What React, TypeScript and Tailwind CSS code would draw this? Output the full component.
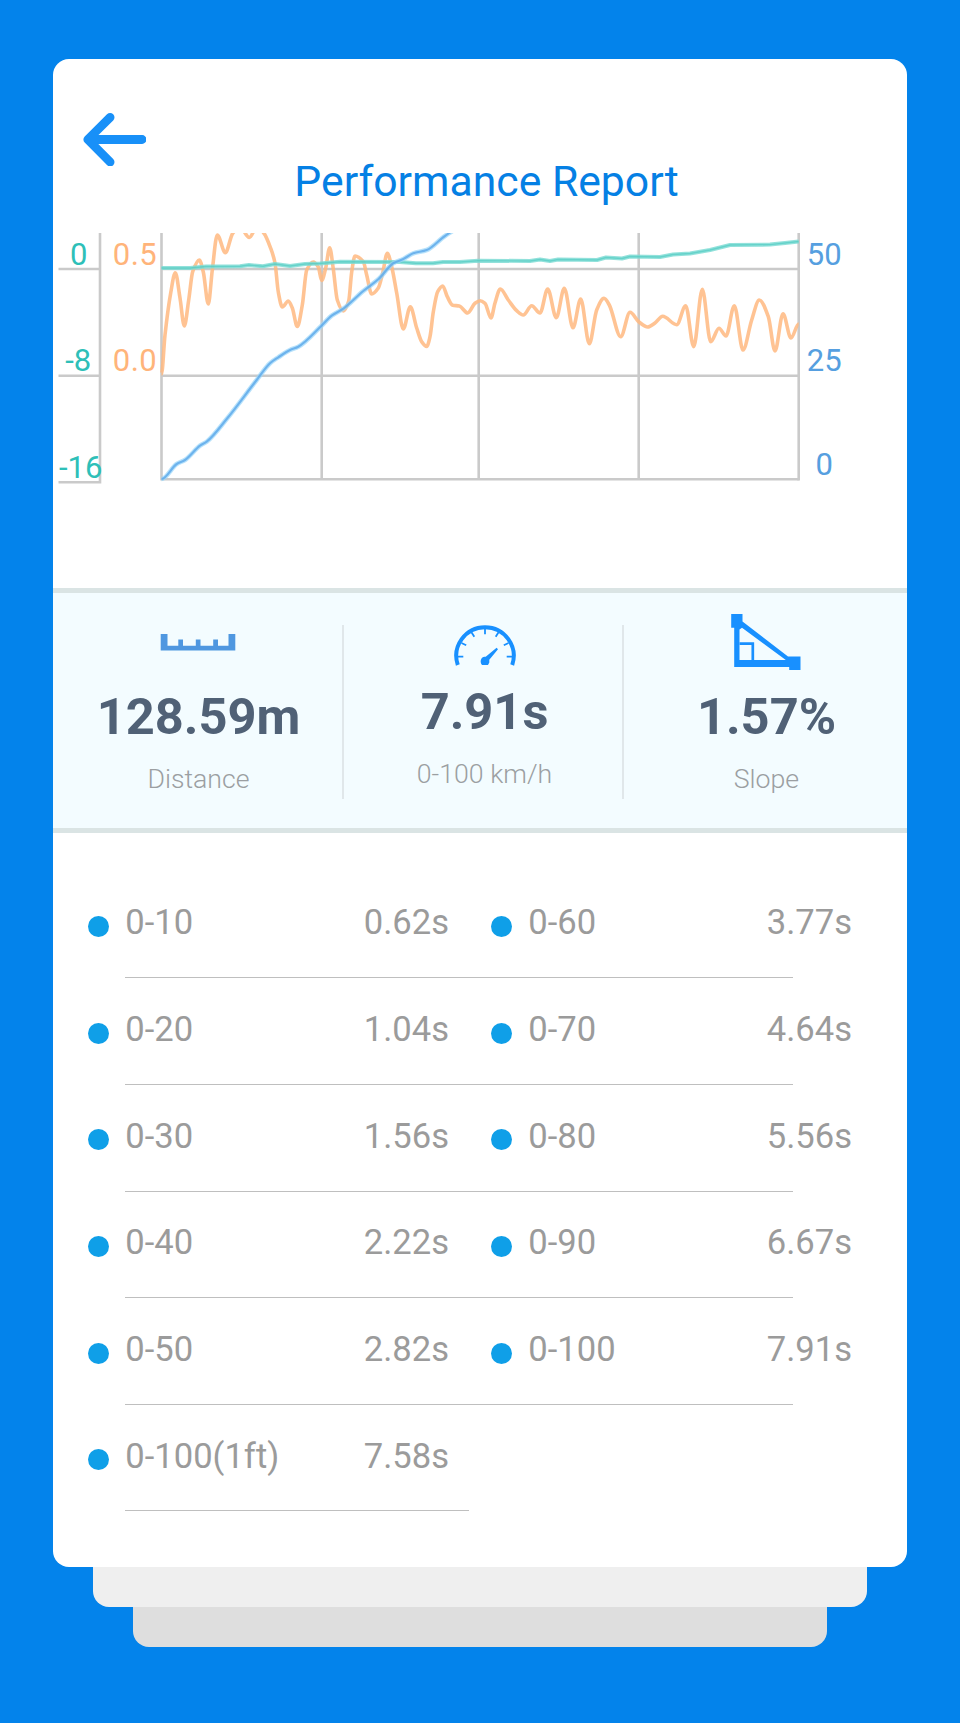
type Point = [number, number];

const acceleration: Point[] = [
  [161.5, 374], [165, 335], [170.7, 293], [175.3, 272.7], [180, 298], [184.3, 326], [188.7, 300],
  [192.7, 271.7], [199.3, 260], [203.3, 272], [208.3, 304], [212.3, 270], [217.3, 235], [225.3, 252.7],
  [232.7, 233.3], [240, 227], [249.3, 237.5], [257, 227], [264, 233.3], [270.7, 248.3], [275, 263],
  [278.3, 292], [282.3, 307], [288.3, 301], [292.3, 308], [297.3, 326.5], [302.3, 305], [306.7, 270],
  [313.3, 262], [318.3, 267], [321.7, 280.5], [325.7, 268], [329.7, 247.7], [333.3, 269], [337.3, 300],
  [343.3, 311], [348.7, 301], [351.7, 272], [355, 256], [363.3, 261.7], [366.7, 275], [371.7, 294],
  [378.3, 288], [382.7, 273], [387.3, 253.3], [391.7, 266.7], [396.7, 293], [403.3, 329], [410.3, 306.7],
  [416.7, 328], [421.7, 341.7], [426.7, 346.5], [430, 336.7], [433.3, 312], [437.7, 291.7], [442.7, 286],
  [447.3, 296.7], [452.7, 305.3], [459.3, 306], [467.7, 313], [475, 303.3], [480, 300.7], [485, 303.3],
  [491, 318], [495, 303], [500.3, 289], [508.3, 300], [516.7, 310.7], [523.3, 315], [531.7, 305.7],
  [540, 313], [547.7, 289], [556.3, 317.7], [564.3, 288.3], [573, 327.7], [580.7, 299], [589.3, 343.7],
  [596.7, 310], [604, 298.3], [609.3, 305], [620.7, 336.7], [630, 312.3], [639, 322], [647.7, 327],
  [655, 323], [662.7, 316.3], [676.7, 324.7], [685.7, 305.7], [693.7, 346.7], [702.3, 289.3],
  [710.7, 341.7], [719, 328.3], [726, 336], [734.3, 305.7], [743, 350], [751.7, 320], [759.3, 300],
  [768.3, 316.7], [775, 351], [783, 313.7], [791, 338], [798.7, 324],
];

const speed: Point[] = [
  [161.5, 479], [176.7, 464], [185, 460], [200, 445.7], [206.7, 441.7], [226.7, 419], [256.7, 380],
  [270, 363.3], [278.3, 357.3], [290, 350], [298.3, 346.7], [321.3, 326], [331.7, 315.7], [343.3, 308.7],
  [363.3, 291], [378.3, 279.3], [393.3, 263.3], [403.3, 259], [413.3, 253.3], [426.7, 250], [445, 236],
  [456, 230],
];

const height: Point[] = [
  [161.5, 268], [190, 268], [206, 266.5], [240, 266.3], [249, 265], [263, 266.3], [275, 264], [290, 266],
  [305, 264], [320, 263.5], [340, 261.8], [400, 262], [416, 263.3], [433, 263.3], [443, 262], [460, 262],
  [478, 260.7], [530, 261], [540, 259.5], [550, 261], [558, 259.5], [597, 260], [606, 257.5],
  [622, 258.5], [630, 256.5], [660, 257], [673, 254.5], [690, 253.5], [710, 250], [730, 245], [770, 244.6],
  [785, 243], [798.7, 241.5],
];

// Smooth curve that never overshoots its peaks
function smooth(points: Point[]) {
  const slope = points.map((p, i) => {
    const prev = points[i - 1];
    const next = points[i + 1];
    if (!prev || !next) return 0;
    const a = (p[1] - prev[1]) / (p[0] - prev[0]);
    const b = (next[1] - p[1]) / (next[0] - p[0]);
    return a * b <= 0 ? 0 : (2 * a * b) / (a + b);
  });
  return points
    .map(([x, y], i) => {
      if (i === 0) return `M${x} ${y}`;
      const [px, py] = points[i - 1];
      const h = (x - px) / 3;
      return `C${px + h} ${py + slope[i - 1] * h} ${x - h} ${y - slope[i] * h} ${x} ${y}`;
    })
    .join("");
}

const line = (points: Point[]) => "M" + points.map((p) => p.join(" ")).join("L");

const results = [
  [["0-10", "0.62s"], ["0-60", "3.77s"]],
  [["0-20", "1.04s"], ["0-70", "4.64s"]],
  [["0-30", "1.56s"], ["0-80", "5.56s"]],
  [["0-40", "2.22s"], ["0-90", "6.67s"]],
  [["0-50", "2.82s"], ["0-100", "7.91s"]],
  [["0-100(1ft)", "7.58s"]],
];

function Chart() {
  return (
    <svg className="block h-[260px] w-[854px]" viewBox="53 233 854 260">
      <g stroke="#cacaca" strokeWidth="2.6" fill="none">
        <path d="M100 232V483.6M58.5 269H100M58.5 375.7H100M58.5 482.3H100" />
        <path d="M161.5 232V480.6M321.7 232V479M478.7 232V479M638.7 232V479M798.7 232V480.6" />
        <path d="M161.5 269H798.7M161.5 375.7H798.7M161.5 479.3H798.7" />
      </g>
      <g fill="none" strokeLinejoin="round">
        <path d={smooth(acceleration)} stroke="#ffb980" strokeWidth="3.6" strokeOpacity="0.85" />
        <path d={line(height)} stroke="#7fdcd5" strokeWidth="4" strokeOpacity="0.85" />
        <path d={line(height)} stroke="#3fc6bc" strokeWidth="1.4" strokeOpacity="0.55" />
        <path d={smooth(speed)} stroke="#9ad6fa" strokeWidth="4.6" strokeOpacity="0.7" />
        <path d={smooth(speed)} stroke="#5aa8ea" strokeWidth="2.2" strokeOpacity="0.8" />
      </g>
      <g fontFamily="Roboto, sans-serif" fontSize="31" textAnchor="middle">
        <g fill="#2ebfb8">
          <text x="78.7" y="264.5">0</text>
          <text x="78.3" y="371">-8</text>
          <text x="80.7" y="477.5">-16</text>
        </g>
        <g fill="#ffb47a">
          <text x="134.8" y="264.5" textLength="44">0.5</text>
          <text x="134.8" y="371" textLength="44">0.0</text>
        </g>
        <g fill="#569fe0">
          <text x="824.3" y="264.5">50</text>
          <text x="824.3" y="371.3">25</text>
          <text x="824.3" y="475.3">0</text>
        </g>
      </g>
    </svg>
  );
}

function RulerIcon() {
  return (
    <svg className="h-[56px] w-[76px]" viewBox="0 0 76 56" fill="#4f97e0">
      <path d="M.7 20H7.5V31.8H18.3V25.5H23V31.8H35.8V25.5H40.5V31.8H53.2V25.5H58V31.8H68.5V20H75.3V36.5H.7Z" />
    </svg>
  );
}

function GaugeIcon() {
  return (
    <svg className="h-[56px] w-[62px]" viewBox="453 614 62 56" fill="none" stroke="#1890ff">
      <path d="M456.8 665A28.7 28.7 0 1 1 511.2 665" strokeWidth="4" />
      <path
        d="M457 656.7H462.3M511 656.7H505.7M460.5 643L465.2 645.3M507.5 643L502.8 645.3M470.3 632L473.3 636.8M497.7 632L494.7 636.8M484 629V634.3"
        strokeWidth="1.8"
      />
      <path d="M495.6 647.8L497 649.2L488.3 659.7V662.5L487 665H481C479.3 663 479.3 660.3 480.5 658.5C481.7 657 483 656.8 484.7 656.8Z" fill="#1890ff" stroke="none" />
    </svg>
  );
}

function SlopeIcon() {
  return (
    <svg className="h-[56px] w-[70px]" viewBox="730.5 614 70 56" fill="#1890ff">
      <path d="M730.7 614H742V621.5L787.5 656.5H800V670H788.7V667H733.7V627.7H730.7ZM739 629.5V660H785.3L741.5 627.7Z" fillRule="evenodd" />
      <path d="M739 643.7H752.3V661" fill="none" stroke="#1890ff" strokeWidth="2.7" />
    </svg>
  );
}

function Result({ label, time }: { label: string; time: string }) {
  return (
    <div className="flex w-[403px] items-start">
      <span className="mt-[45px] size-[21px] shrink-0 rounded-full bg-[#0f9fe8]" />
      <span className="mt-[31.4px] ml-[16.3px] flex-1">{label}</span>
      <span className="mt-[31.4px] mr-[42px]">{time}</span>
    </div>
  );
}

export default function App() {
  return (
    <div className="flex min-h-[1723px] flex-col items-center bg-[#0383eb] pt-[59px] font-['Roboto',sans-serif]">
      <main className="h-[1507.5px] w-[854px] rounded-[16px] bg-white">
        <header className="h-[174px] pt-[53px]">
          <svg
            className="ml-[29px] block h-[54px] w-[64px]"
            viewBox="82.2 112 64 54"
            fill="none"
            stroke="#1890f8"
            strokeWidth="8.8"
            strokeLinecap="round"
            strokeLinejoin="round"
          >
            <path d="M142.3 139.5H89M110.3 117.3L88 139.5L110.3 162" />
          </svg>
          <h1 className="-mt-[10px] ml-[13px] text-center text-[42.7px] leading-[50px] text-[#0580e4]">
            Performance Report
          </h1>
        </header>

        <Chart />

        <section className="mt-[95px] flex h-[245px] border-y-[5px] border-[#dae4e4] bg-[#f3fcff] text-center">
          <div className="flex w-[289px] flex-col items-center pt-[21px]">
            <RulerIcon />
            <div className="mt-[17px] ml-[2px] text-[50.6px] leading-[60px] font-bold text-[#506176]">128.59m</div>
            <div className="mt-[16px] ml-[2px] text-[26.7px] leading-[32px] font-light text-[#9b9fa2]">Distance</div>
          </div>
          <div className="mt-[32px] h-[174px] w-[2px] bg-[#e0e7ea]" />
          <div className="flex w-[278px] flex-col items-center pt-[21px] pl-[3px]">
            <GaugeIcon />
            <div className="mt-[12px] text-[50.6px] leading-[60px] font-bold text-[#506176]">7.91s</div>
            <div className="mt-[16px] text-[26.7px] leading-[32px] font-light text-[#9b9fa2]">0-100 km/h</div>
          </div>
          <div className="mt-[32px] h-[174px] w-[2px] bg-[#e0e7ea]" />
          <div className="flex flex-1 flex-col items-center pt-[21px]">
            <SlopeIcon />
            <div className="mt-[17px] ml-[2px] text-[50.6px] leading-[60px] font-bold text-[#506176]">1.57%</div>
            <div className="mt-[16px] ml-[2px] text-[26.7px] leading-[32px] font-light text-[#9b9fa2]">Slope</div>
          </div>
        </section>

        <section className="pt-[38px] text-[34.6px] leading-[40px] text-[#9b9b9b]">
          {results.map((row) => (
            <div key={row[0][0]} className="h-[106.67px] pl-[35px]">
              <div className="flex h-[106.2px]">
                {row.map(([label, time]) => (
                  <Result key={label} label={label} time={time} />
                ))}
              </div>
              <div className={row.length > 1 ? "ml-[37px] h-px w-[668px] bg-[#bfbfbf]" : "ml-[37px] h-px w-[344px] bg-[#bfbfbf]"} />
            </div>
          ))}
        </section>
      </main>
      <div className="h-[40px] w-[774px] rounded-b-[16px] bg-[#efefef]" />
      <div className="h-[40px] w-[694px] rounded-b-[16px] bg-[#dedede]" />
    </div>
  );
}
